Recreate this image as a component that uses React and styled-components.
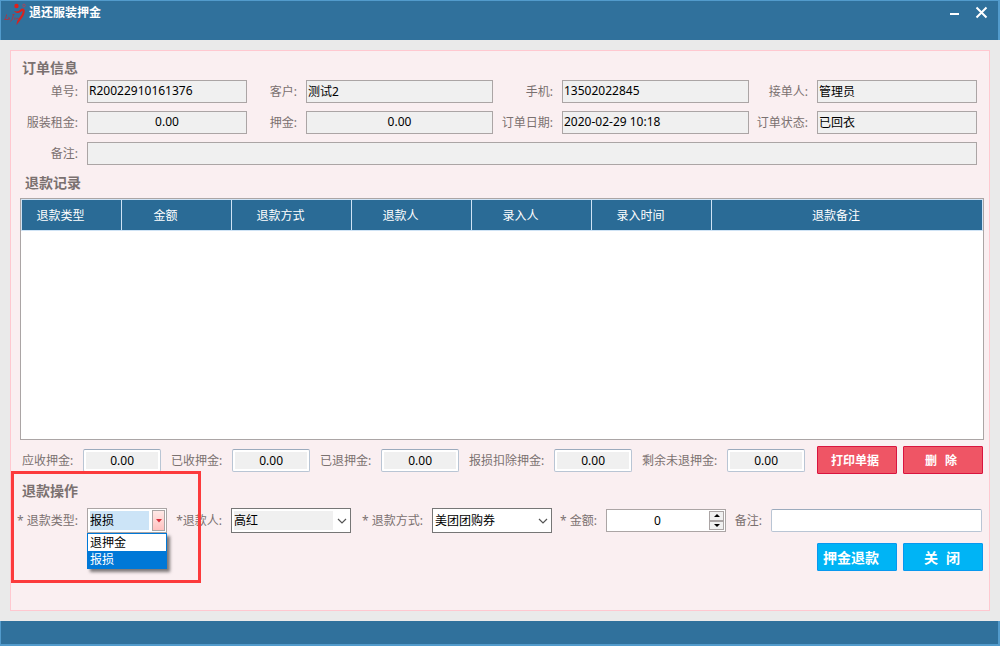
import { useState } from 'react';
import styled, { createGlobalStyle, css } from 'styled-components';

const GlobalStyle = createGlobalStyle`
    * {
        box-sizing: border-box;
    }
    body {
        margin: 0;
        font-family: 'Noto Sans', 'Noto Sans CJK SC', sans-serif;
        font-size: 12px;
        color: #000;
    }
    input, select, button {
        margin: 0;
        font: inherit;
        color: inherit;
        border-radius: 0;
    }
`;

const Window = styled.div`
    min-height: 100vh;
    display: flex;
    flex-direction: column;
    background-color: #eaeaea;
`;

const TitleBar = styled.header`
    height: 40px;
    display: flex;
    align-items: flex-start;
    padding: 2px 10px 0 3px;
    background-color: #30719c;
    border: solid #529bcc;
    border-width: 1px 2px 0 1px;
`;

const WindowTitle = styled.h1`
    flex: 1;
    margin: 0;
    padding-left: 1px;
    font-size: 12px;
    line-height: 20px;
    color: #fff;
`;

const WindowButton = styled.button`
    width: 13px;
    height: 18px;
    margin-left: 14px;
    padding: 0;
    display: flex;
    align-items: center;
    background: none;
    border: none;
`;

const Panel = styled.main`
    flex: 1;
    display: flex;
    flex-direction: column;
    margin: 10px;
    padding: 7px 0 39px;
    background-color: #faeff1;
    border: 1px solid #ffc8d0;
`;

const Heading = styled.h2`
    margin: 0;
    padding-left: 11px;
    font-size: 14px;
    line-height: 20px;
    color: #7a7170;
`;

const RecordHeading = styled(Heading)`
    margin: 8px 0 5px;
    padding-left: 14px;
`;

const OrderGrid = styled.div`
    display: grid;
    grid-template-columns: 66px 160fr 59px 187fr 69px 187fr 68px 160fr;
    grid-auto-rows: 23px;
    row-gap: 8px;
    padding: 2px 12px 0 10px;
`;

const Field = styled.div`
    display: contents;
`;

const Label = styled.label`
    align-self: center;
    padding-right: 9px;
    text-align: right;
    line-height: 18px;
    white-space: nowrap;
    color: #7a7170;
`;

const ReadInput = styled.input`
    width: 100%;
    min-width: 0;
    height: 23px;
    padding: 0 1px 2px;
    text-align: ${({ $center }) => ($center ? 'center' : 'left')};
    background-color: #f0f0f0;
    border: 1px solid #aba5a5;
`;

const RemarkInput = styled(ReadInput)`
    grid-column: 2 / -1;
`;

const TableBox = styled.div`
    flex: 1;
    margin: 0 5px 0 9px;
    background-color: #fff;
    border: 1px solid #aba5a5;
`;

const Table = styled.table`
    width: 100%;
    table-layout: fixed;
    border-spacing: 0;
    border: solid #cfe3f5;
    border-width: 1px 0 0 1px;
`;

const Th = styled.th`
    height: 31px;
    padding: 0 22px 0 0;
    font-weight: normal;
    color: #fff;
    background-color: #2a6b96;
    border: solid #cfe3f5;
    border-width: 0 1px 1px 0;
`;

const Totals = styled.div`
    display: flex;
    align-items: center;
    gap: 10px;
    padding: 6px 6px 7px 11px;
`;

const TotalLabel = styled(Label)`
    padding: 2px 0 0;
`;

const TextInput = styled.input`
    width: 100%;
    min-width: 0;
    height: 23px;
    padding: 0 2px;
    background-color: #fff;
    border: 1px solid #b9c5d4;
    border-top-color: #9cabbd;
    border-radius: 2px;
`;

const TotalInput = styled(TextInput)`
    flex: 1;
    text-align: center;
    background-color: #f0f0f0;
    box-shadow: inset 0 0 0 2px #fff;
`;

const Actions = styled.div`
    display: flex;
    gap: 6px;
    padding-left: 2px;
`;

const Button = styled.button`
    width: 80px;
    height: 28px;
    padding: 0 4px 0 0;
    display: flex;
    align-items: center;
    justify-content: center;
    gap: 8px;
    font-weight: bold;
    color: #fff;
    border-radius: 1px;
`;

const RedButton = styled(Button)`
    background-color: #ef5565;
    border: 1px solid #d9143f;
`;

const BlueButton = styled(Button)`
    padding-right: ${({ $wide }) => ($wide ? '12px' : '2px')};
    font-size: 14px;
    background-color: #00b4f5;
    border: 1px solid #0898ef;
`;

const Operation = styled.section`
    position: relative;
`;

const OperationGrid = styled.div`
    display: grid;
    grid-template-columns: 76px 80px 64px 120px 81px 120px 54px 120px 45px 1fr;
    align-items: center;
    padding: 7px 7px 0 0;
`;

const SelectBox = styled.div`
    position: relative;
    height: 25px;
`;

const Select = styled.select`
    appearance: none;
    width: 100%;
    height: 25px;
    padding: 0 20px 1px 2px;
    border: 1px solid ${({ $border }) => $border};
    ${({ $tone }) => css`
        background: linear-gradient(${$tone}, ${$tone}) 2px 2px /
            calc(100% - 19px) calc(100% - 4px) no-repeat #fff;
    `}
`;

const PinkArrow = styled.span`
    position: absolute;
    top: 2px;
    right: 2px;
    bottom: 2px;
    width: 13px;
    display: flex;
    align-items: center;
    justify-content: center;
    background: linear-gradient(#ffe8e6, #ffc2c0);
    border: 1px solid #aba5a5;
    pointer-events: none;
`;

const Chevron = styled.svg`
    position: absolute;
    top: 10px;
    right: 4px;
    pointer-events: none;
`;

const Menu = styled.ul`
    position: absolute;
    top: 100%;
    left: 0;
    z-index: 1;
    width: 100%;
    margin: 0;
    padding: 0;
    list-style: none;
    background-color: #fff;
    border: 1px solid #0078d7;
    box-shadow: 3px 3px 3px rgba(0, 0, 0, 0.5);
`;

const MenuItem = styled.li`
    height: 17px;
    padding-left: 2px;
    line-height: 17px;
    color: ${({ $active }) => ($active ? '#fff' : '#000')};
    background-color: ${({ $active }) => ($active ? '#0078d7' : '#fff')};
`;

const Spinner = styled.div`
    height: 23px;
    display: flex;
    padding: 1px;
    background-color: #fff;
    border: 1px solid #aba5a5;
`;

const NumberInput = styled.input`
    flex: 1;
    min-width: 0;
    padding: 0 2px 0 0;
    text-align: center;
    background: none;
    border: none;
    appearance: textfield;

    &::-webkit-inner-spin-button {
        appearance: none;
    }
`;

const SpinButtons = styled.div`
    width: 15px;
    display: flex;
    flex-direction: column;
`;

const SpinButton = styled.button`
    flex: 1;
    min-height: 0;
    padding: 0;
    display: flex;
    align-items: center;
    justify-content: center;
    background-color: #f0f0f0;
    border: 1px solid #aba5a5;
`;

const Footer = styled.div`
    display: flex;
    justify-content: flex-end;
    gap: 6px;
    padding: 10px 6px 0 0;
`;

// 退款类型外围的红色标注框
const Highlight = styled.div`
    position: absolute;
    top: -10px;
    left: 0;
    width: 190px;
    height: 112px;
    border: 3px solid #fc3a3c;
    pointer-events: none;
`;

const StatusBar = styled.footer`
    height: 25px;
    background-color: #30719c;
    border: solid #529bcc;
    border-width: 0 2px 2px 1px;
`;

const orderFields = [
    { id: 'orderNo', label: '单号:', value: 'R20022910161376' },
    { id: 'customer', label: '客户:', value: '测试2' },
    { id: 'phone', label: '手机:', value: '13502022845' },
    { id: 'receiver', label: '接单人:', value: '管理员' },
    { id: 'rent', label: '服装租金:', value: '0.00', center: true },
    { id: 'deposit', label: '押金:', value: '0.00', center: true },
    { id: 'orderDate', label: '订单日期:', value: '2020-02-29 10:18' },
    { id: 'orderStatus', label: '订单状态:', value: '已回衣' },
];

const columns = [
    { title: '退款类型', width: 100 },
    { title: '金额', width: 110 },
    { title: '退款方式', width: 120 },
    { title: '退款人', width: 120 },
    { title: '录入人', width: 120 },
    { title: '录入时间', width: 120 },
    { title: '退款备注' },
];

const totals = [
    { id: 'due', label: '应收押金:' },
    { id: 'received', label: '已收押金:' },
    { id: 'refunded', label: '已退押金:' },
    { id: 'deducted', label: '报损扣除押金:' },
    { id: 'remaining', label: '剩余未退押金:' },
];

const refundTypes = ['退押金', '报损'];

const Logo = () => (
    <svg width="24" height="24" viewBox="0 0 24 24" fill="none">
        <circle cx="12.5" cy="3" r="2.2" fill="#e0201c" />
        <path
            d="M10 8c2.500 1 5 .5 7-2 3-1.500 4.500 1 3.500 4-1 4-4.500 7.500-8 12 0-3 1-5 3-7.500 2-2.300 3.500-4.500 3-7-2.500 3-6 3.500-8.500.5z"
            fill="#d8231f"
        />
        <path
            d="M2.500 11.500c0 2-.8 4-2 5h3M4.500 14.500c1.500-.5.5 2-.5 2s1-.3 2-1M9.500 11.500c-.5 2.500-1.500 6-3 7M8.500 11.500h2M11 14.500l-.6 2M12 16.500c.5-1.500 2-2 2-.5"
            stroke="#b8303a"
            strokeWidth="0.9"
        />
        <circle cx="20" cy="2.5" r="1.3" stroke="#a8465a" strokeWidth="0.9" />
    </svg>
);

const RefundTypeSelect = () => {
    const [value, setValue] = useState('报损');
    const [open, setOpen] = useState(true);

    const handleSelect = type => {
        setValue(type);
        setOpen(false);
    };

    return (
        <SelectBox>
            <Select
                id="refundType"
                $tone="#cce4f7"
                $border="#aba5a5"
                value={value}
                onChange={e => handleSelect(e.target.value)}
            >
                {refundTypes.map(type => (
                    <option key={type}>{type}</option>
                ))}
            </Select>
            <PinkArrow>
                <svg width="6" height="4" viewBox="0 0 6 4">
                    <path d="M0 0h6L3 3.500z" fill="#d8303c" />
                </svg>
            </PinkArrow>
            {open && (
                <Menu role="listbox" aria-label="退款类型">
                    {refundTypes.map(type => (
                        <MenuItem
                            key={type}
                            role="option"
                            aria-selected={type === value}
                            $active={type === value}
                            onClick={() => handleSelect(type)}
                        >
                            {type}
                        </MenuItem>
                    ))}
                </Menu>
            )}
        </SelectBox>
    );
};

const ComboBox = ({ id, options, tone }) => (
    <SelectBox>
        <Select id={id} $tone={tone} $border="#767676">
            {options.map(item => (
                <option key={item}>{item}</option>
            ))}
        </Select>
        <Chevron width="10" height="6" viewBox="0 0 10 6">
            <path d="M1 1l4 4 4-4" fill="none" stroke="#555" strokeWidth="1.2" />
        </Chevron>
    </SelectBox>
);

const AmountInput = () => {
    const [amount, setAmount] = useState(0);

    return (
        <Spinner>
            <NumberInput
                id="amount"
                type="number"
                value={amount}
                onChange={e => setAmount(Number(e.target.value))}
            />
            <SpinButtons>
                <SpinButton aria-label="增加" onClick={() => setAmount(amount + 1)}>
                    <svg width="6" height="3" viewBox="0 0 6 3">
                        <path d="M0 3h6L3 0z" fill="#000" />
                    </svg>
                </SpinButton>
                <SpinButton aria-label="减少" onClick={() => setAmount(amount - 1)}>
                    <svg width="6" height="3" viewBox="0 0 6 3">
                        <path d="M0 0h6L3 3z" fill="#000" />
                    </svg>
                </SpinButton>
            </SpinButtons>
        </Spinner>
    );
};

const App = () => {
    return (
        <>
            <GlobalStyle />
            <Window>
                <TitleBar>
                    <Logo />
                    <WindowTitle>退还服装押金</WindowTitle>
                    <WindowButton aria-label="最小化">
                        <svg width="13" height="13" viewBox="0 0 13 13">
                            <path d="M2 8h9" stroke="#fff" strokeWidth="2" />
                        </svg>
                    </WindowButton>
                    <WindowButton aria-label="关闭窗口">
                        <svg width="13" height="13" viewBox="0 0 13 13">
                            <path d="M1.500 1.500l10 10M11.500 1.500l-10 10" stroke="#fff" strokeWidth="2" />
                        </svg>
                    </WindowButton>
                </TitleBar>

                <Panel>
                    <Heading>订单信息</Heading>
                    <OrderGrid>
                        {orderFields.map(item => (
                            <Field key={item.id}>
                                <Label htmlFor={item.id}>{item.label}</Label>
                                <ReadInput
                                    id={item.id}
                                    $center={item.center}
                                    value={item.value}
                                    readOnly
                                />
                            </Field>
                        ))}
                        <Label htmlFor="orderRemark">备注:</Label>
                        <RemarkInput id="orderRemark" readOnly />
                    </OrderGrid>

                    <RecordHeading>退款记录</RecordHeading>
                    <TableBox>
                        <Table>
                            <colgroup>
                                {columns.map(col => (
                                    <col key={col.title} width={col.width} />
                                ))}
                            </colgroup>
                            <thead>
                                <tr>
                                    {columns.map(col => (
                                        <Th key={col.title}>{col.title}</Th>
                                    ))}
                                </tr>
                            </thead>
                        </Table>
                    </TableBox>

                    <Totals>
                        {totals.map(item => (
                            <Field key={item.id}>
                                <TotalLabel htmlFor={item.id}>{item.label}</TotalLabel>
                                <TotalInput id={item.id} value="0.00" readOnly />
                            </Field>
                        ))}
                        <Actions>
                            <RedButton>打印单据</RedButton>
                            <RedButton>
                                <span>删</span>
                                <span>除</span>
                            </RedButton>
                        </Actions>
                    </Totals>

                    <Operation>
                        <Heading>退款操作</Heading>
                        <OperationGrid>
                            <Label htmlFor="refundType">* 退款类型:</Label>
                            <RefundTypeSelect />
                            <Label htmlFor="refundUser">*退款人:</Label>
                            <ComboBox id="refundUser" options={['高红']} tone="#f0f0f0" />
                            <Label htmlFor="refundWay">* 退款方式:</Label>
                            <ComboBox id="refundWay" options={['美团团购券']} tone="#fff" />
                            <Label htmlFor="amount">* 金额:</Label>
                            <AmountInput />
                            <Label htmlFor="remark">备注:</Label>
                            <TextInput id="remark" />
                        </OperationGrid>
                        <Footer>
                            <BlueButton $wide>押金退款</BlueButton>
                            <BlueButton>
                                <span>关</span>
                                <span>闭</span>
                            </BlueButton>
                        </Footer>
                        <Highlight />
                    </Operation>
                </Panel>

                <StatusBar />
            </Window>
        </>
    );
};
export default App;
